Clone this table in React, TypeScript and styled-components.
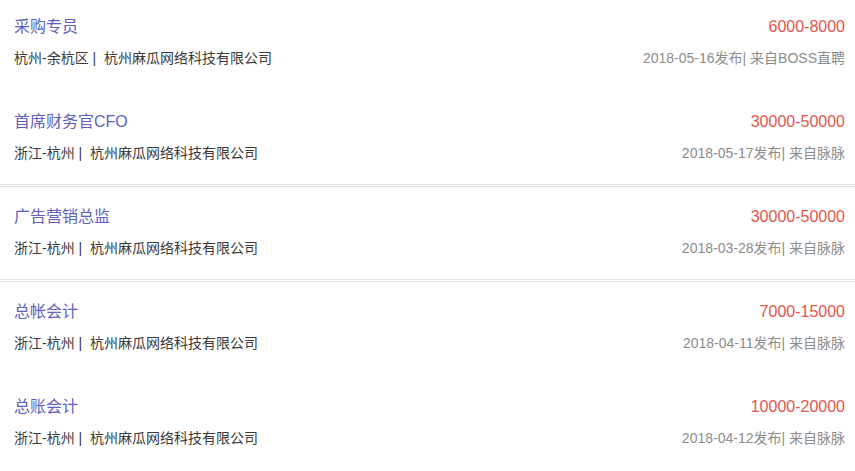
import React from "react";
import styled, { createGlobalStyle } from "styled-components";

const GlobalStyle = createGlobalStyle`
  html, body { margin: 0; padding: 0; background: #ffffff; }
  body { font-family: "Liberation Sans", "Noto Sans CJK SC", sans-serif; }
`;

type Job = {
  title: string;
  salary: string;
  location: string;
  company: string;
  date: string;
  source: string;
  divided?: boolean;
};

const jobs: Job[] = [
  { title: "采购专员", salary: "6000-8000", location: "杭州-余杭区", company: "杭州麻瓜网络科技有限公司", date: "2018-05-16", source: "BOSS直聘" },
  { title: "首席财务官CFO", salary: "30000-50000", location: "浙江-杭州", company: "杭州麻瓜网络科技有限公司", date: "2018-05-17", source: "脉脉", divided: true },
  { title: "广告营销总监", salary: "30000-50000", location: "浙江-杭州", company: "杭州麻瓜网络科技有限公司", date: "2018-03-28", source: "脉脉", divided: true },
  { title: "总帐会计", salary: "7000-15000", location: "浙江-杭州", company: "杭州麻瓜网络科技有限公司", date: "2018-04-11", source: "脉脉" },
  { title: "总账会计", salary: "10000-20000", location: "浙江-杭州", company: "杭州麻瓜网络科技有限公司", date: "2018-04-12", source: "脉脉" },
];

const List = styled.ul`
  list-style: none;
  margin: 0;
  padding: 0;
  width: 855px;
`;

const Item = styled.li<{ $divided?: boolean }>`
  box-sizing: border-box;
  height: ${(p) => (p.$divided ? "92px" : "95px")};
  margin-bottom: ${(p) => (p.$divided ? "3px" : "0")};
  padding: 15px 10px 0 14px;
  display: flex;
  flex-direction: column;
  gap: 9px;
  border-bottom: ${(p) => (p.$divided ? "3px double #e2e2e2" : "none")};
`;

const Row = styled.div`
  display: flex;
  justify-content: space-between;
  align-items: center;
`;

const Title = styled.a`
  font-size: 16px;
  line-height: 24px;
  color: #6060c0;
  text-decoration: none;
`;

const Salary = styled.span`
  font-size: 16px;
  line-height: 24px;
  color: #e4554c;
`;

const Meta = styled.span`
  font-size: 14px;
  line-height: 20px;
  color: #3a3a3a;
  white-space: pre;
`;

const Source = styled.span`
  font-size: 14px;
  line-height: 20px;
  color: #8c8c8c;
  white-space: pre;
`;

export default function App() {
  return (
    <>
      <GlobalStyle />
      <List>
        {jobs.map((j) => (
          <Item key={j.title} $divided={j.divided}>
            <Row>
              <Title href="#">{j.title}</Title>
              <Salary>{j.salary}</Salary>
            </Row>
            <Row>
              <Meta>{`${j.location} |  ${j.company}`}</Meta>
              <Source>{`${j.date}发布| 来自${j.source}`}</Source>
            </Row>
          </Item>
        ))}
      </List>
    </>
  );
}
